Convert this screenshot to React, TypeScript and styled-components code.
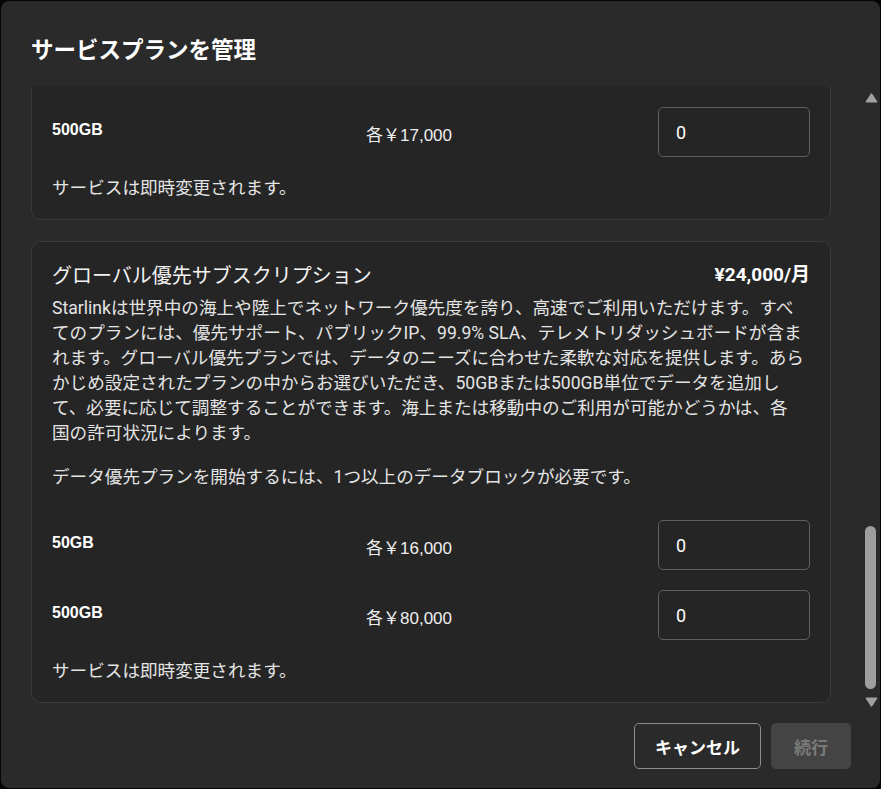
import React, { useCallback, useLayoutEffect, useRef, useState } from "react";
import styled, { createGlobalStyle } from "styled-components";

const Global = createGlobalStyle`
  html, body { margin: 0; padding: 0; background: #050505; }
  body { font-family: "Noto Sans CJK JP", sans-serif; color: #fff; }
  * { box-sizing: border-box; }
`;

const Dialog = styled.div`
  margin: 1px;
  width: 879px;
  height: 787px;
  background: #2a2a2a;
  border-radius: 8px;
  display: flex;
  flex-direction: column;
  overflow: hidden;
`;

const Header = styled.div`
  height: 86px;
  flex: none;
  display: flex;
  align-items: center;
  padding: 8px 30px 0;
`;

const Title = styled.h2`
  margin: 0;
  font-family: "Noto Sans CJK JP", sans-serif;
  font-weight: 700;
  font-size: 22.5px;
  color: #fff;
`;

const Body = styled.div`
  flex: 1;
  min-height: 0;
  display: flex;
`;

const Scroller = styled.div`
  flex: 1;
  min-width: 0;
  overflow-y: auto;
  scrollbar-width: none;
  padding: 0 32px 6px 30px;
  display: flex;
  flex-direction: column;
  gap: 21px;
  &::-webkit-scrollbar {
    display: none;
  }
`;

const Rail = styled.div`
  flex: none;
  width: 17px;
  display: flex;
  flex-direction: column;
`;

const ArrowBtn = styled.div<{ $down?: boolean }>`
  flex: none;
  height: ${(p) => (p.$down ? 17 : 18)}px;
  display: flex;
  justify-content: center;
  align-items: ${(p) => (p.$down ? "flex-start" : "flex-end")};
  padding: ${(p) => (p.$down ? "5px 1px 0 0" : "0 1px 2px 0")};
`;

const Track = styled.div`
  flex: 1;
  position: relative;
`;

const Thumb = styled.div`
  position: absolute;
  left: 2px;
  width: 11px;
  background: #9e9e9e;
  border-radius: 6px;
`;

const Card = styled.section`
  flex: none;
  background: #252525;
  border: 1px solid #3b3b3b;
  border-radius: 10px;
  padding: 20px 20px 18px;
  display: flex;
  flex-direction: column;
`;

const CardHead = styled.div`
  display: flex;
  justify-content: space-between;
  align-items: center;
  line-height: 26px;
`;

const CardTitle = styled.h3`
  margin: 0;
  font-weight: 400;
  font-size: 20px;
  font-family: "Noto Sans CJK JP", sans-serif;
  color: #f2f2f2;
`;

const Price = styled.div`
  font-family: "Roboto", "Noto Sans CJK JP", sans-serif;
  font-weight: 700;
  font-size: 19px;
  color: #fff;
`;

const Text = styled.p<{ $top?: number }>`
  margin: ${(p) => p.$top ?? 0}px 0 0;
  font-family: "Roboto", "Noto Sans CJK JP", sans-serif;
  font-size: 17.6px;
  line-height: 25px;
  color: #e4e4e4;
`;

const Rows = styled.div`
  margin-top: 30px;
  display: flex;
  flex-direction: column;
  gap: 20px;
`;

const Row = styled.div`
  display: grid;
  grid-template-columns: 314px 1fr 152px;
  align-items: center;
  height: 50px;
`;

const Label = styled.div`
  font-family: "Liberation Sans", Arial, sans-serif;
  font-weight: 700;
  font-size: 16px;
  color: #fff;
  padding-bottom: 5px;
`;

const Each = styled.div`
  font-family: "Liberation Sans", "Noto Sans CJK JP", sans-serif;
  font-size: 17px;
  color: #eee;
  padding-top: 3px;
`;

const Qty = styled.input`
  width: 152px;
  height: 50px;
  background: transparent;
  border: 1px solid #5f5f5f;
  border-radius: 5px;
  padding: 0 17px;
  font-family: "Roboto", sans-serif;
  font-size: 18px;
  color: #fff;
  outline: none;
`;

const Footer = styled.div`
  flex: none;
  display: flex;
  justify-content: flex-end;
  gap: 10px;
  padding: 14px 29px 19px;
`;

const Button = styled.button<{ $primary?: boolean }>`
  height: 46px;
  border-radius: 5px;
  font-family: "Noto Sans CJK JP", sans-serif;
  font-weight: 700;
  font-size: 17px;
  cursor: pointer;
  ${(p) =>
    p.$primary
      ? `width: 80px; background: #444; border: none; color: #7a7a7a;`
      : `width: 127px; background: transparent; border: 1px solid #8c8c8c; color: #fff;`}
`;

type Block = { label: string; price: string };
type Plan = {
  title: string;
  price: string;
  desc: React.ReactNode;
  start?: string;
  blocks: Block[];
};

const START = "データ優先プランを開始するには、1つ以上のデータブロックが必要です。";

const COMMON =
  "すべてのプランには、優先サポート、パブリックIP、99.9% SLA、テレメトリダッシュボードが含まれます。";

const plans: Plan[] = [
  {
    title: "スタンダードサブスクリプション",
    price: "¥6,600/月",
    desc:
      "Starlinkのスタンダードプランでは、ご登録の住所で無制限のデータをご利用いただけます。混雑時にはネットワークの状況により速度が低下する場合があります。",
    blocks: [],
  },
  {
    title: "ローミングサブスクリプション",
    price: "¥9,900/月",
    desc:
      "ローミングプランでは、国内のどこでもStarlinkをご利用いただけます。移動中のご利用には対応していない場合があります。ご利用可能な地域は、各国の許可状況によります。",
    blocks: [],
  },
  {
    title: "海上優先サブスクリプション",
    price: "¥30,000/月",
    desc:
      "Starlinkは海上でネットワーク優先度を誇り、高速でご利用いただけます。" +
      COMMON +
      "海上優先プランでは、データのニーズに合わせた柔軟な対応を提供します。あらかじめ設定されたプランの中からお選びいただき、50GBまたは500GB単位でデータを追加して、必要に応じて調整することができます。",
    start: START,
    blocks: [
      { label: "50GB", price: "各￥20,000" },
      { label: "500GB", price: "各￥100,000" },
    ],
  },
  {
    title: "モバイル優先サブスクリプション",
    price: "¥12,000/月",
    desc:
      "Starlinkは移動中でもネットワーク優先度を誇り、高速でご利用いただけます。" +
      COMMON +
      "モバイル優先プランでは、データのニーズに合わせた柔軟な対応を提供します。あらかじめ設定されたプランの中からお選びいただき、50GBまたは500GB単位でデータを追加して、必要に応じて調整することができます。",
    start: START,
    blocks: [
      { label: "50GB", price: "各￥8,000" },
      { label: "500GB", price: "各￥40,000" },
    ],
  },
  {
    title: "ローカル優先サブスクリプション",
    price: "¥4,200/月",
    desc:
      "Starlinkは陸上でネットワーク優先度を誇り、高速でご利用いただけます。" +
      COMMON +
      "ローカル優先プランでは、データのニーズに合わせた柔軟な対応を提供します。あらかじめ設定されたプランの中からお選びいただき、50GBまたは500GB単位でデータを追加して、必要に応じて調整することができます。",
    start: START,
    blocks: [
      { label: "50GB", price: "各￥3,400" },
      { label: "500GB", price: "各￥17,000" },
    ],
  },
  {
    title: "グローバル優先サブスクリプション",
    price: "¥24,000/月",
    desc: (
      <>
        {"Starlinkは世界中の海上や陸上でネットワーク優先度を誇り、高速でご利用いただけます。" +
          COMMON +
          "グローバル優先プランでは、データのニーズに合わせた柔軟な対応を提供します。あらかじめ設定されたプランの中からお選びいただき、50GBまたは500GB単位でデータを追加して、必要に応じて調整することができます。海上または移動中のご利用が可能かどうかは、各"}
        <br />
        国の許可状況によります。
      </>
    ),
    start: START,
    blocks: [
      { label: "50GB", price: "各￥16,000" },
      { label: "500GB", price: "各￥80,000" },
    ],
  },
];

function PlanCard({ plan }: { plan: Plan }) {
  return (
    <Card>
      <CardHead>
        <CardTitle>{plan.title}</CardTitle>
        <Price>{plan.price}</Price>
      </CardHead>
      <Text $top={8}>{plan.desc}</Text>
      {plan.start && <Text $top={19}>{plan.start}</Text>}
      {plan.blocks.length > 0 && (
        <Rows>
          {plan.blocks.map((b) => (
            <Row key={b.label}>
              <Label>{b.label}</Label>
              <Each>{b.price}</Each>
              <Qty defaultValue="0" />
            </Row>
          ))}
        </Rows>
      )}
      <Text $top={19}>サービスは即時変更されます。</Text>
    </Card>
  );
}

function Triangle({ down }: { down?: boolean }) {
  return (
    <svg width="13" height="10" viewBox="0 0 13 10">
      <path
        d={down ? "M1.5 1.2 L11.5 1.2 L6.5 8.8 Z" : "M6.5 1.2 L11.5 8.8 L1.5 8.8 Z"}
        fill="#a0a0a0"
        stroke="#a0a0a0"
        strokeWidth="1.6"
        strokeLinejoin="round"
      />
    </svg>
  );
}

export default function App() {
  const ref = useRef<HTMLDivElement>(null);
  const trackRef = useRef<HTMLDivElement>(null);
  const [thumb, setThumb] = useState({ top: 0, height: 0 });

  const measure = useCallback(() => {
    const el = ref.current;
    const tr = trackRef.current;
    if (!el || !tr) return;
    const usable = tr.clientHeight - 6;
    const h = Math.max(24, (usable * el.clientHeight) / el.scrollHeight);
    const max = el.scrollHeight - el.clientHeight;
    const ratio = max > 0 ? el.scrollTop / max : 0;
    setThumb({ top: 3 + (usable - h) * ratio, height: h });
  }, []);

  useLayoutEffect(() => {
    const el = ref.current;
    if (el) el.scrollTop = el.scrollHeight;
    measure();
  }, [measure]);

  return (
    <>
      <Global />
      <Dialog>
        <Header>
          <Title>サービスプランを管理</Title>
        </Header>
        <Body>
          <Scroller ref={ref} onScroll={measure}>
            {plans.map((p) => (
              <PlanCard key={p.title} plan={p} />
            ))}
          </Scroller>
          <Rail>
            <ArrowBtn>
              <Triangle />
            </ArrowBtn>
            <Track ref={trackRef}>
              <Thumb style={{ top: thumb.top, height: thumb.height }} />
            </Track>
            <ArrowBtn $down>
              <Triangle down />
            </ArrowBtn>
          </Rail>
        </Body>
        <Footer>
          <Button>キャンセル</Button>
          <Button $primary>続行</Button>
        </Footer>
      </Dialog>
    </>
  );
}
